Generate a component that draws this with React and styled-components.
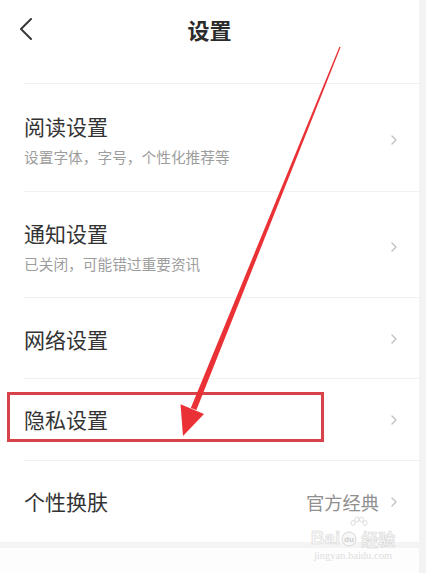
import React from "react";
import styled, { createGlobalStyle } from "styled-components";

const GlobalStyle = createGlobalStyle`
  html, body { margin: 0; padding: 0; background: #ffffff; }
  body { font-family: "Noto Sans CJK SC", "Noto Sans", sans-serif; }
  * { box-sizing: border-box; }
`;

const Page = styled.div`
  position: relative;
  display: flex;
  width: 426px;
  height: 573px;
  overflow: hidden;
  background: #ffffff;
`;

const Main = styled.div`
  width: 419px;
  display: flex;
  flex-direction: column;
`;

const Gutter = styled.div`
  flex: 1;
  background: #f3f3f3;
`;

const HeaderBar = styled.div`
  height: 58px;
  display: grid;
  grid-template-columns: 1fr auto 1fr;
  align-items: center;
`;

const BackButton = styled.div`
  display: flex;
  align-items: center;
  padding-left: 19px;
`;

const Title = styled.h1`
  margin: 0;
  font-size: 22px;
  font-weight: 700;
  color: #2b2b2b;
  line-height: 1;
  letter-spacing: 0;
`;

const Divider = styled.div`
  height: 1px;
  margin-left: 24px;
  margin-top: ${(p) => p.$top || 0}px;
  background: #f1f1f1;
`;

const Row = styled.div`
  height: ${(p) => p.$h}px;
  display: flex;
  align-items: center;
  padding: ${(p) => p.$shift || 0}px 22px 0 24px;
`;

const TextCol = styled.div`
  flex: 1;
  display: flex;
  flex-direction: column;
  gap: 7px;
`;

const RowTitle = styled.div`
  font-size: 21px;
  line-height: 27px;
  color: #333333;
`;

const RowSub = styled.div`
  font-size: 14.7px;
  line-height: 19px;
  color: #9d9d9d;
`;

const RowValue = styled.span`
  font-size: 18.3px;
  color: #8f8f8f;
  margin-right: 12px;
`;

const SectionGap = styled.div`
  height: 6px;
  background: #f4f4f4;
`;

const Rest = styled.div`
  flex: 1;
  background: #fdfdfd;
`;

const Overlay = styled.svg`
  position: absolute;
  left: 0;
  top: 0;
  pointer-events: none;
`;

const Watermark = styled.div`
  position: absolute;
  left: 306px;
  top: 516px;
  width: 94px;
  display: flex;
  flex-direction: column;
  align-items: center;
  color: #e4e4e4;
  font-family: "Liberation Sans", sans-serif;
  pointer-events: none;
`;

const WmMain = styled.div`
  display: flex;
  align-items: flex-end;
  font-size: 19px;
  font-weight: 700;
  line-height: 1;
  -webkit-text-stroke: 0.6px #d8d8d8;
  color: #f7f7f7;
`;

const WmCjk = styled.span`
  font-family: "Noto Sans CJK SC", sans-serif;
  font-size: 17px;
  margin-left: 3px;
`;

const WmUrl = styled.div`
  font-family: "Liberation Serif", serif;
  font-size: 10.5px;
  margin-top: 3px;
  color: #dedede;
`;

const Chevron = () => (
  <svg width="6" height="10" viewBox="0 0 6 10">
    <polyline points="1,1 5,5 1,9" fill="none" stroke="#c2c2c2" strokeWidth="1.4" strokeLinecap="round" strokeLinejoin="round" />
  </svg>
);

const BackIcon = () => (
  <svg width="14" height="22" viewBox="0 0 14 22">
    <polyline points="12,1 2,11 12,21" fill="none" stroke="#3a3a3a" strokeWidth="2" strokeLinecap="round" strokeLinejoin="round" />
  </svg>
);

const items = [
  { title: "阅读设置", sub: "设置字体，字号，个性化推荐等", h: 107, shift: 4 },
  { title: "通知设置", sub: "已关闭，可能错过重要资讯", h: 105, shift: 4 },
  { title: "网络设置", h: 80, shift: 2 },
  { title: "隐私设置", h: 81 },
  { title: "个性换肤", value: "官方经典", h: 81, last: true },
];

export default function App() {
  return (
    <>
      <GlobalStyle />
      <Page>
        <Main>
          <HeaderBar>
            <BackButton>
              <BackIcon />
            </BackButton>
            <Title>设置</Title>
            <span />
          </HeaderBar>
          <Divider $top={25} />
          {items.map((it) => (
            <React.Fragment key={it.title}>
              <Row $h={it.h} $shift={it.shift}>
                <TextCol>
                  <RowTitle>{it.title}</RowTitle>
                  {it.sub && <RowSub>{it.sub}</RowSub>}
                </TextCol>
                {it.value && <RowValue>{it.value}</RowValue>}
                <Chevron />
              </Row>
              {!it.last && <Divider />}
            </React.Fragment>
          ))}
          <SectionGap />
          <Rest />
        </Main>
        <Gutter />
        <Watermark>
          <svg width="20" height="12" viewBox="0 0 20 12" style={{ marginLeft: 10 }}>
            <g fill="none" stroke="#d9d9d9" strokeWidth="0.9">
              <ellipse cx="5" cy="7" rx="2" ry="2.6" />
              <ellipse cx="9" cy="3.5" rx="2" ry="2.6" />
              <ellipse cx="13.5" cy="3.5" rx="2" ry="2.6" />
              <ellipse cx="17" cy="7" rx="2" ry="2.6" />
            </g>
          </svg>
          <WmMain>
            Bai
            <svg width="16" height="16" viewBox="0 0 16 16" style={{ margin: "0 1px" }}>
              <circle cx="8" cy="8" r="7" fill="#f7f7f7" stroke="#d8d8d8" strokeWidth="1" />
              <text x="8" y="11" fontSize="8" textAnchor="middle" fill="#cfcfcf" fontFamily="Liberation Sans">du</text>
            </svg>
            <WmCjk>经验</WmCjk>
          </WmMain>
          <WmUrl>jingyan.baidu.com</WmUrl>
        </Watermark>
        <Overlay width="426" height="573" viewBox="0 0 426 573">
          <rect x="8.5" y="393.5" width="314" height="47" fill="none" stroke="#d8434a" strokeWidth="3" />
          <polygon points="340.6,47.3 339.4,46.7 190.8,408.0 196.4,410.0" fill="#ea3236" />
          <polygon points="183,436 180.5,404.3 204,414" fill="#ea3236" />
        </Overlay>
      </Page>
    </>
  );
}
